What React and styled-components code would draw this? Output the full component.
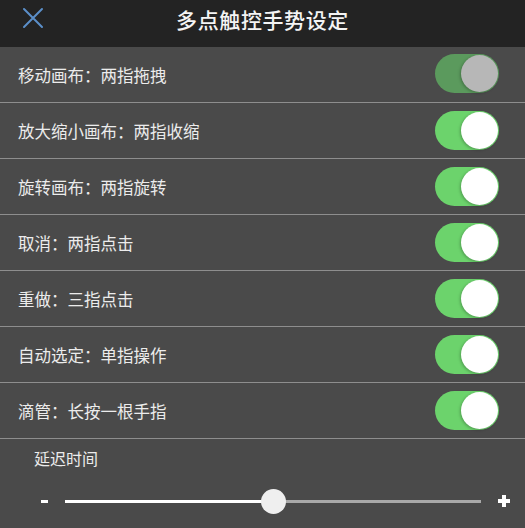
import React from 'react';
import styled, { createGlobalStyle } from 'styled-components';

const GlobalStyle = createGlobalStyle`
  html, body {
    margin: 0;
    padding: 0;
    background: #4a4a4a;
  }
  body {
    font-family: "Noto Sans CJK SC", "Noto Sans", sans-serif;
  }
`;

const Page = styled.div`
  width: 525px;
  height: 528px;
  background: #4a4a4a;
  overflow: hidden;
`;

const Header = styled.div`
  height: 47px;
  background: #232323;
  display: flex;
  align-items: center;
  justify-content: center;
  position: relative;
`;

const CloseButton = styled.button`
  position: absolute;
  left: 22px;
  top: 7px;
  width: 24px;
  height: 24px;
  padding: 0;
  border: none;
  background: none;
  display: flex;
`;

const Title = styled.h1`
  margin: 0 0 9px;
  color: #f4f4f4;
  font-size: 21px;
  font-weight: 500;
  letter-spacing: 0.6px;
`;

const Row = styled.div`
  height: 55px;
  border-bottom: 1px solid #8e8e8e;
  display: flex;
  align-items: center;
  justify-content: space-between;
  padding: 0 26px 0 18px;
`;

const Label = styled.span`
  color: #ececec;
  font-size: 16.5px;
`;

const Track = styled.div`
  width: 64px;
  height: 39px;
  border-radius: 20px;
  background: ${p => (p.dim ? '#5b9a5d' : '#6cd36c')};
  position: relative;
  margin-top: ${p => (p.dim ? '-3px' : '-1px')};
`;

const Knob = styled.div`
  position: absolute;
  right: 1px;
  top: 1px;
  width: 37px;
  height: 37px;
  border-radius: 50%;
  background: ${p => (p.dim ? '#b7b7b7' : '#ffffff')};
  box-shadow: -1px 1px 3px rgba(0, 0, 0, 0.25);
`;

const DelaySection = styled.div`
  padding: 7px 14px 0 34px;
`;

const DelayLabel = styled.div`
  color: #ececec;
  font-size: 16px;
`;

const SliderRow = styled.div`
  display: flex;
  align-items: center;
  height: 42px;
  margin-top: 10px;
  margin-left: 7px;
`;

const Minus = styled.div`
  width: 7px;
  height: 3px;
  background: #fff;
  margin-right: 17px;
`;

const SliderTrack = styled.div`
  flex: 0 0 416px;
  height: 3px;
  background: #a9a9a9;
  position: relative;
`;

const SliderFill = styled.div`
  position: absolute;
  left: 0;
  top: 0;
  height: 3px;
  background: #ffffff;
`;

const Thumb = styled.div`
  position: absolute;
  top: -11px;
  width: 25px;
  height: 25px;
  margin-left: -12px;
  border-radius: 50%;
  background: #efefef;
`;

const Plus = styled.div`
  margin-left: 17px;
  width: 12px;
  height: 12px;
  position: relative;
  &::before,
  &::after {
    content: '';
    position: absolute;
    background: #fff;
  }
  &::before {
    left: 0;
    top: 4px;
    width: 12px;
    height: 4px;
  }
  &::after {
    left: 4px;
    top: 0;
    width: 4px;
    height: 12px;
  }
`;

const gestures = [
  { label: '移动画布：两指拖拽', dim: true },
  { label: '放大缩小画布：两指收缩' },
  { label: '旋转画布：两指旋转' },
  { label: '取消：两指点击' },
  { label: '重做：三指点击' },
  { label: '自动选定：单指操作' },
  { label: '滴管：长按一根手指' },
];

function Toggle({ dim }) {
  return (
    <Track dim={dim}>
      <Knob dim={dim} />
    </Track>
  );
}

export default function App() {
  const delay = 0.5;
  return (
    <Page>
      <GlobalStyle />
      <Header>
        <CloseButton>
          <svg width="22" height="22" viewBox="0 0 22 22">
            <path d="M2 2 L20 20 M20 2 L2 20" stroke="#5b8fc9" strokeWidth="2" strokeLinecap="round" />
          </svg>
        </CloseButton>
        <Title>多点触控手势设定</Title>
      </Header>
      {gestures.map((g, i) => (
        <Row key={i}>
          <Label>{g.label}</Label>
          <Toggle dim={g.dim} />
        </Row>
      ))}
      <DelaySection>
        <DelayLabel>延迟时间</DelayLabel>
        <SliderRow>
          <Minus />
          <SliderTrack>
            <SliderFill style={{ width: `${delay * 100}%` }} />
            <Thumb style={{ left: `${delay * 100}%` }} />
          </SliderTrack>
          <Plus />
        </SliderRow>
      </DelaySection>
    </Page>
  );
}
